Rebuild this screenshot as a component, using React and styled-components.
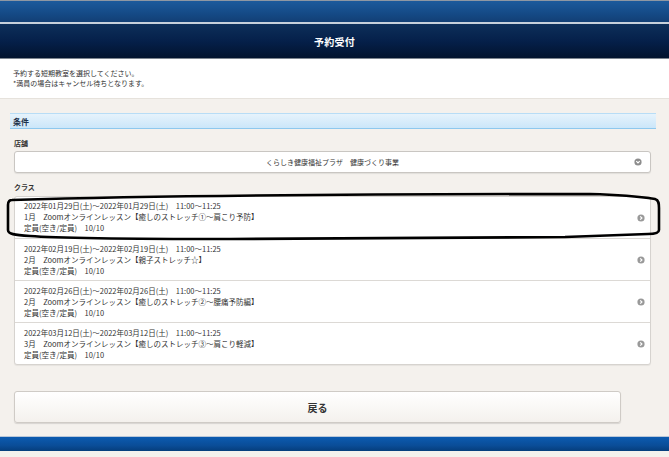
import React from "react";
import styled, { createGlobalStyle } from "styled-components";

const GlobalStyle = createGlobalStyle`
  html, body { margin: 0; padding: 0; }
  body {
    background: #f4f1ed;
    font-family: "Noto Sans CJK JP", "Noto Sans", sans-serif;
    color: #333;
  }
`;

const Page = styled.div`
  width: 669px;
  height: 457px;
  display: flex;
  flex-direction: column;
  overflow: hidden;
  background: #f4f1ed;
`;

const TopBand = styled.div`
  height: 21px;
  border-top: 1px solid #8e97a3;
  border-bottom: 2px solid #c6d0db;
  background: linear-gradient(#1c5a9c, #154a86 60%, #123f75);
`;

const Header = styled.header`
  height: 34px;
  border-bottom: 1px solid #7c848e;
  background: linear-gradient(#0d2f5a, #05204a 50%, #02132e);
  display: flex;
  align-items: center;
  justify-content: center;
  color: #fff;
  font-size: 10px;
  font-weight: 700;
  letter-spacing: 0.3px;
`;

const Intro = styled.div`
  background: #fff;
  padding: 9px 13px 10px;
  font-size: 7px;
  line-height: 10px;
  color: #333;
  border-bottom: 1px solid #e6e2dc;
`;

const Main = styled.main`
  padding: 14px 13px 0 10px;
  display: flex;
  flex-direction: column;
`;

const SectionBar = styled.div`
  height: 14px;
  border-top: 1px solid #b8ddf6;
  border-bottom: 1px solid #8ec8ee;
  background: linear-gradient(#e6f3fc, #cbe6f9);
  display: flex;
  align-items: center;
  padding-left: 3px;
  font-size: 8px;
  font-weight: 700;
  color: #1c3048;
`;

const Label = styled.div`
  margin: 9px 0 0 4px;
  font-size: 7px;
  line-height: 10px;
  font-weight: 700;
  color: #333;
`;

const Select = styled.div`
  margin: 3px 5px 0 4px;
  height: 20px;
  border: 1px solid #c9c6c2;
  border-radius: 3px;
  background: #fff;
  box-shadow: 0 1px 1px rgba(0, 0, 0, 0.08);
  display: flex;
  align-items: center;
  justify-content: center;
  position: relative;
  font-size: 7px;
  color: #333;
`;

const SelectIcon = styled.svg`
  position: absolute;
  right: 8px;
  top: 6px;
  width: 8px;
  height: 8px;
`;

const ListWrap = styled.div`
  position: relative;
  margin: 4px 5px 0 4px;
`;

const List = styled.ul`
  list-style: none;
  margin: 0;
  padding: 0;
  background: #fff;
  border: 1px solid #d6d3cf;
  border-radius: 3px;
  box-shadow: 0 1px 1px rgba(0, 0, 0, 0.06);
`;

const Item = styled.li`
  height: ${(p) => (p.$first ? "41px" : "42px")};
  box-sizing: border-box;
  padding: ${(p) => (p.$first ? "4px" : "5px")} 24px 0 9px;
  border-top: ${(p) => (p.$first ? "none" : "1px solid #dcd9d5")};
  position: relative;
  font-size: 7.5px;
  line-height: 10.8px;
  color: #333;
  white-space: nowrap;
`;

const ArrowIcon = styled.svg`
  position: absolute;
  right: 5px;
  top: 17px;
  width: 8px;
  height: 8px;
`;

const Annotation = styled.svg`
  position: absolute;
  left: 0;
  top: 0;
  width: 1px;
  height: 1px;
  overflow: visible;
  pointer-events: none;
`;

const BackButton = styled.button`
  margin: 26px 35px 0 4px;
  height: 32px;
  border: 1px solid #cfcbc6;
  border-radius: 3px;
  background: linear-gradient(#ffffff, #f4f1ed);
  box-shadow: 0 1px 1px rgba(0, 0, 0, 0.12);
  font-family: inherit;
  font-size: 10px;
  font-weight: 700;
  color: #333;
  padding: 0;
`;

const FooterBand = styled.div`
  margin-top: 13px;
  height: 14px;
  border-top: 1px solid #b9c7d8;
  background: linear-gradient(#0c5bb0, #0a4d98 60%, #063e7c);
`;

const classes = [
  {
    date: "2022年01月29日(土)～2022年01月29日(土)　11:00～11:25",
    title: "1月　Zoomオンラインレッスン【癒しのストレッチ①～肩こり予防】",
  },
  {
    date: "2022年02月19日(土)～2022年02月19日(土)　11:00～11:25",
    title: "2月　Zoomオンラインレッスン【親子ストレッチ☆】",
  },
  {
    date: "2022年02月26日(土)～2022年02月26日(土)　11:00～11:25",
    title: "2月　Zoomオンラインレッスン【癒しのストレッチ②～腰痛予防編】",
  },
  {
    date: "2022年03月12日(土)～2022年03月12日(土)　11:00～11:25",
    title: "3月　Zoomオンラインレッスン【癒しのストレッチ③～肩こり軽減】",
  },
];

export default function App() {
  return (
    <>
      <GlobalStyle />
      <Page>
        <TopBand />
        <Header>予約受付</Header>
        <Intro>
          予約する短期教室を選択してください。
          <br />
          *満員の場合はキャンセル待ちとなります。
        </Intro>
        <Main>
          <SectionBar>条件</SectionBar>
          <Label>店舗</Label>
          <Select>
            くらしき健康福祉プラザ　健康づくり事業
            <SelectIcon viewBox="0 0 8 8">
              <circle cx="4" cy="4" r="3.6" fill="#8d8d8d" />
              <path d="M2.3 3.2 L4 4.9 L5.7 3.2" stroke="#fff" strokeWidth="1.2" fill="none" />
            </SelectIcon>
          </Select>
          <Label>クラス</Label>
          <ListWrap>
            <List>
              {classes.map((c, i) => (
                <Item key={i} $first={i === 0}>
                  {c.date}
                  <br />
                  {c.title}
                  <br />
                  定員(空き/定員)　10/10
                  <ArrowIcon viewBox="0 0 8 8">
                    <circle cx="4" cy="4" r="3.6" fill="#999" />
                    <path d="M3.2 2.3 L4.9 4 L3.2 5.7" stroke="#fff" strokeWidth="1.2" fill="none" />
                  </ArrowIcon>
                </Item>
              ))}
            </List>
            <Annotation>
              <path
                d="M -2 4 C 100 1, 300 -2, 576 -2 C 610 -1, 628 1, 641 3 C 645 4, 645 8, 645 12 L 645 34 C 645 37, 640 38, 634 38 L 551 41 L 216 43 C 120 43, 40 42, 16 40 C 0 39, -6 38, -6 34 L -6 9 C -6 5, -4 4, -2 4 Z"
                stroke="#000"
                strokeWidth="2.6"
                fill="none"
                strokeLinejoin="round"
              />
            </Annotation>
          </ListWrap>
          <BackButton>戻る</BackButton>
        </Main>
        <FooterBand />
      </Page>
    </>
  );
}
